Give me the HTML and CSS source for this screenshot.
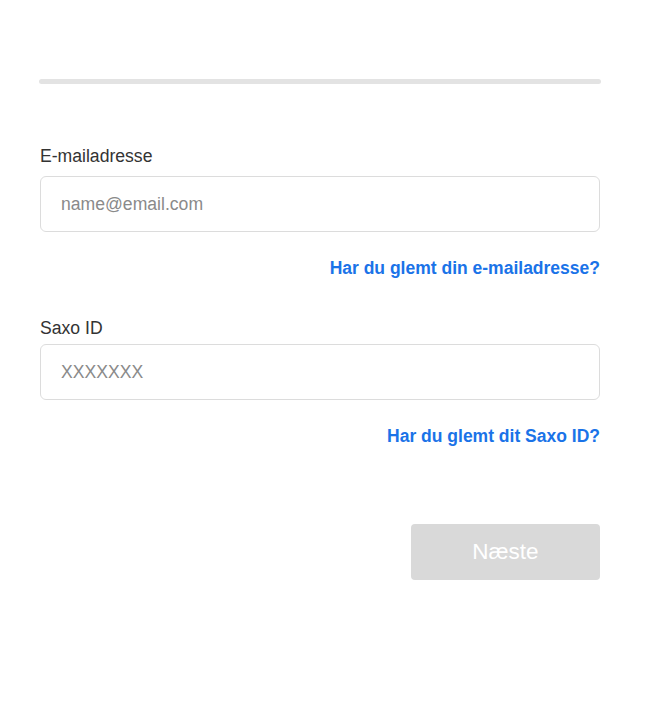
FILE: index.html
```html
<!DOCTYPE html>
<html lang="da">
<head>
    <meta charset="UTF-8">
    <meta name="viewport" content="width=device-width, initial-scale=1.0">
    <title>Log ind</title>
    <link rel="stylesheet" href="styles.css">
</head>
<body>
    <div class="login-container">
        <div class="progress-bar"></div>
        <form id="loginForm" class="login-form">
            <div class="form-group">
                <label for="email">E-mailadresse</label>
                <input type="email" id="email" name="email" placeholder="name@email.com">
                <a href="#" class="form-link">Har du glemt din e-mailadresse?</a>
            </div>
            <div class="form-group form-group-id">
                <label for="saxoId">Saxo ID</label>
                <input type="text" id="saxoId" name="saxoId" placeholder="XXXXXXX">
                <a href="#" class="form-link">Har du glemt dit Saxo ID?</a>
            </div>
            <div class="form-actions">
                <button type="submit" class="btn-next" disabled>Næste</button>
            </div>
        </form>
    </div>
</body>
</html>
```

FILE: styles.css
```css
:root {
    --text-color: #333333;
    --link-color: #1a73e8;
    --border-color: #dcdcdc;
    --muted-color: #d9d9d9;
}

body {
    font-family: 'Liberation Sans', Arial, sans-serif;
    margin: 0;
    padding: 0;
    background-color: white;
    color: var(--text-color);
}

.login-container {
    width: 562px;
    padding: 79px 0 0 39px;
}

.progress-bar {
    height: 5px;
    border-radius: 3px;
    background-color: #e3e3e3;
}

.login-form {
    padding: 62px 0 0 1px;
    width: 560px;
}

.form-group {
    display: flex;
    flex-direction: column;
    margin-bottom: 40px;
}

.form-group label {
    font-size: 17.6px;
    line-height: 20px;
    margin-bottom: 10px;
}

.form-group-id label {
    margin-bottom: 6px;
}

.form-group input {
    height: 56px;
    padding: 0 20px;
    border: 1px solid var(--border-color);
    border-radius: 6px;
    font-family: inherit;
    font-size: 17.6px;
    color: var(--text-color);
    box-sizing: border-box;
}

.form-group input::placeholder {
    color: #8a8a8a;
}

.form-group input:focus {
    outline: none;
    border-color: var(--link-color);
}

.form-link {
    align-self: flex-end;
    margin-top: 26px;
    font-size: 17.5px;
    line-height: 20px;
    font-weight: bold;
    color: var(--link-color);
    text-decoration: none;
}

.form-actions {
    display: flex;
    justify-content: flex-end;
    padding-top: 38px;
}

.btn-next {
    width: 189px;
    height: 56px;
    border: none;
    border-radius: 4px;
    background-color: var(--muted-color);
    color: white;
    font-family: inherit;
    font-size: 22.5px;
}
```
